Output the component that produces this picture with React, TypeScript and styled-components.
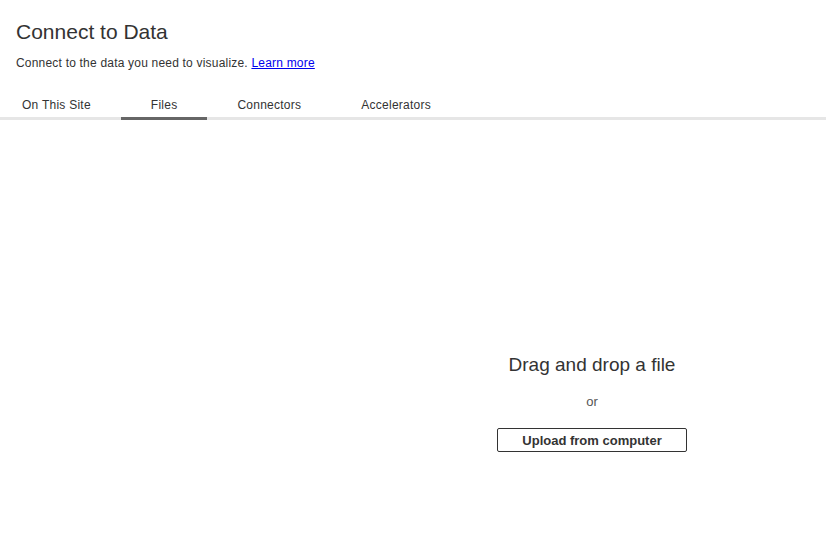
import React from "react";
import styled, { createGlobalStyle } from "styled-components";

const Global = createGlobalStyle`
  html, body { margin: 0; padding: 0; background: #fff; }
  body { font-family: "Liberation Sans", Arial, sans-serif; color: #333; }
  * { box-sizing: border-box; }
`;

const Page = styled.div`
  width: 826px;
  height: 534px;
  display: flex;
  flex-direction: column;
  background: #fff;
`;

const Header = styled.header`
  padding: 20px 16px 0 16px;
  display: flex;
  flex-direction: column;
`;

const Title = styled.h1`
  margin: 0;
  font-size: 21px;
  font-weight: 400;
  line-height: 24px;
  color: #333;
`;

const Subtitle = styled.p`
  margin: 12px 0 0 0;
  font-size: 12px;
  letter-spacing: 0.2px;
  line-height: 14px;
  color: #333;
`;

const Link = styled.a`
  color: #0000ee;
  text-decoration: underline;
`;

const TabBar = styled.nav`
  margin-top: 25px;
  display: flex;
  border-bottom: 3px solid #e6e6e6;
`;

const Tab = styled.div<{ $active?: boolean; $first?: boolean }>`
  position: relative;
  padding: 1px 30px 0 ${(p) => (p.$first ? "22px" : "30px")};
  height: 22px;
  font-size: 12px;
  letter-spacing: 0.25px;
  line-height: 18px;
  color: #333;
  white-space: nowrap;
  &::after {
    content: "";
    position: absolute;
    left: 0;
    right: 0;
    bottom: -3px;
    height: 3px;
    background: ${(p) => (p.$active ? "#666" : "transparent")};
  }
`;

const Body = styled.main`
  flex: 1;
  display: grid;
  grid-template-columns: 358px 1fr;
`;

const SidePanel = styled.div``;

const DropZone = styled.div`
  display: flex;
  flex-direction: column;
  align-items: center;
  padding-top: 234px;
`;

const DropTitle = styled.div`
  font-size: 19px;
  line-height: 22px;
  color: #333;
`;

const Or = styled.div`
  margin-top: 18px;
  font-size: 13px;
  line-height: 16px;
  color: #555;
`;

const UploadButton = styled.button`
  margin-top: 18px;
  width: 190px;
  height: 24px;
  padding: 0;
  border: 1px solid #333;
  border-radius: 2px;
  background: #fff;
  font-family: "Liberation Sans", Arial, sans-serif;
  font-size: 13px;
  font-weight: 700;
  color: #333;
  cursor: pointer;
`;

export default function App() {
  return (
    <Page>
      <Global />
      <Header>
        <Title>Connect to Data</Title>
        <Subtitle>
          Connect to the data you need to visualize. <Link href="#">Learn more</Link>
        </Subtitle>
      </Header>
      <TabBar>
        <Tab $first>On This Site</Tab>
        <Tab $active>Files</Tab>
        <Tab>Connectors</Tab>
        <Tab>Accelerators</Tab>
      </TabBar>
      <Body>
        <SidePanel />
        <DropZone>
          <DropTitle>Drag and drop a file</DropTitle>
          <Or>or</Or>
          <UploadButton>Upload from computer</UploadButton>
        </DropZone>
      </Body>
    </Page>
  );
}
